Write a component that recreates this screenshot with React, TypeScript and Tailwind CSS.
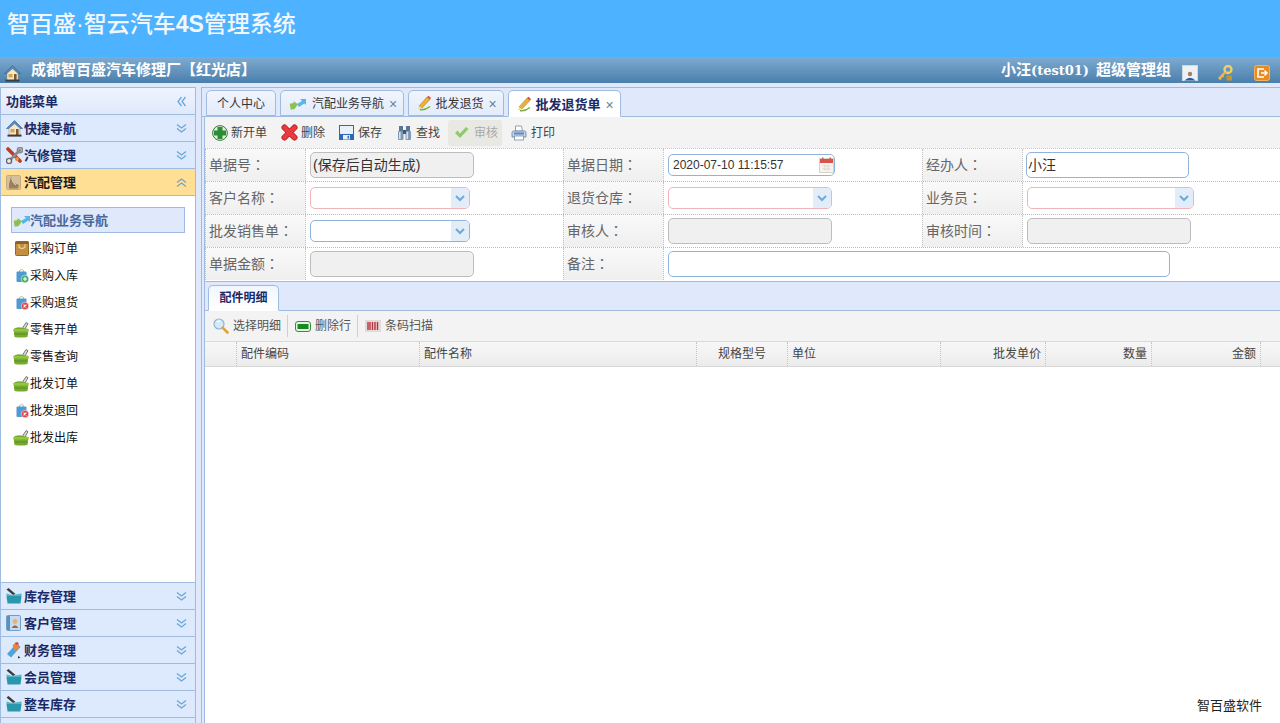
import type { ReactNode } from 'react'

const cjk = "font-['Liberation_Sans','Noto_Sans_CJK_SC',sans-serif]"

/* ---------- 小图标 ---------- */
function Svg({ w = 16, h = 16, children }: { w?: number; h?: number; children: ReactNode }) {
  return (
    <svg width={w} height={h} viewBox={`0 0 ${w} ${h}`} className="shrink-0 block">
      {children}
    </svg>
  )
}

const HomeIcon = () => (
  <Svg w={17} h={17}>
    <path d="M8.5 .5 L16.5 8.5 L14 8.5 L8.5 3.5 L3 8.5 L.5 8.5 Z" fill="#4f8cc8" stroke="#2d5f94" strokeWidth=".6" />
    <path d="M3 8.5 L8.5 3.8 L14 8.5 V15 H3 Z" fill="#f4e9cf" stroke="#a68a55" strokeWidth=".5" />
    <rect x="4.5" y="9" width="4" height="3.5" fill="#d9a441" />
    <rect x="10" y="9" width="2.6" height="6" fill="#7a5a30" />
    <rect x="1.5" y="14.6" width="14" height="2" fill="#3d3d3d" />
  </Svg>
)
const ToolsIcon = () => (
  <Svg w={17} h={17}>
    <path d="M2 2 L14 14" stroke="#c0392b" strokeWidth="3.6" strokeLinecap="round" />
    <path d="M14 3 L3 14" stroke="#8b8b8b" strokeWidth="2.8" strokeLinecap="round" />
    <circle cx="14" cy="3" r="2.6" fill="none" stroke="#8a8a8a" strokeWidth="1.6" />
    <circle cx="3" cy="14" r="2.6" fill="#e8e8e8" stroke="#666" strokeWidth="1.4" />
    <circle cx="11" cy="12" r="2" fill="#e8913a" />
  </Svg>
)
const PartsIcon = () => (
  <Svg w={15} h={15}>
    <rect x=".5" y=".5" width="14" height="14" rx="1" fill="#d6bf99" stroke="#c2aa82" />
    <path d="M5 1.5 L8 8 L13 10 L12 13.5 H3 L3 9 Z" fill="#9c8059" />
    <path d="M5.5 3 L7.5 8 L10 10" stroke="#eadfca" strokeWidth=".9" fill="none" />
  </Svg>
)
const NavIcon = () => (
  <Svg w={18} h={14}>
    <path d="M1 7 H5 V5 L9 9 L5 13 H1 Z" fill="#8cc152" transform="rotate(-10 5 9)" />
    <path d="M8 8 L13 5 L11 3 H17 V9 L15.3 7.5 L10 11 Z" fill="#58b4ec" />
  </Svg>
)
const BrownBag = () => (
  <Svg w={14} h={15}>
    <rect x=".5" y=".5" width="13" height="14" rx="1" fill="#c58f42" stroke="#94682c" />
    <rect x=".5" y=".5" width="13" height="2.5" fill="#8d6129" />
    <path d="M4 3 V6 Q7 9 10 6 V3" fill="none" stroke="#eed39a" strokeWidth="1.1" />
  </Svg>
)
const BlueBag = ({ kind }: { kind: 'plus' | 'x' }) => (
  <Svg w={13} h={15}>
    <path d="M3.5 4 V2.5 Q5.5 .2 7.5 2.5 V4" fill="none" stroke="#b9a78a" strokeWidth=".9" />
    <rect x=".5" y="3.5" width="10" height="10.5" rx="1" fill="#4f9ad1" />
    <circle cx="9" cy="11" r="3.8" fill={kind === 'plus' ? '#3fae64' : '#e0444d'} stroke="#fff" strokeWidth=".5" />
    {kind === 'plus' ? (
      <path d="M7 11 H11 M9 9 V13" stroke="#fff" strokeWidth="1.2" />
    ) : (
      <path d="M7.6 9.6 L10.4 12.4 M10.4 9.6 L7.6 12.4" stroke="#fff" strokeWidth="1.1" />
    )}
  </Svg>
)
const Basket = () => (
  <Svg w={16} h={16}>
    <path d="M9.5 6 L13 .6 L15 1.6 L12 7" fill="#d8d8d8" stroke="#5e5e5e" strokeWidth=".8" />
    <path d="M.5 7 Q4 4.5 8 5.5 L15.5 7 L14.5 15 Q8 16 1.5 15 Z" fill="#77ab2f" />
    <path d="M.5 7 H15.5 V9.5 H.8 Z" fill="#93c640" />
    <path d="M1.2 12 H14.8" stroke="#55871e" strokeWidth=".8" />
  </Svg>
)
const Toolbox = () => (
  <Svg w={16} h={16}>
    <path d="M.5 1.5 L2.5 0 L9.5 6 L7 7 Z" fill="#3c3c3c" />
    <path d="M.5 5.5 L6 7 L15.5 5.5 V8 H.5 Z" fill="#55b6c9" />
    <path d="M.5 8 H15.5 L14.5 15.5 H1.5 Z" fill="#2a97ad" />
  </Svg>
)
const ContactIcon = () => (
  <Svg w={15} h={16}>
    <rect x=".5" y=".5" width="14" height="15" rx="1" fill="#c5dcf0" stroke="#6f9fc7" />
    <rect x="1" y="1" width="3" height="14" fill="#5a8fc0" />
    <circle cx="9" cy="6.5" r="2.4" fill="#e6b07e" />
    <path d="M5.5 13 Q9 7.5 12.5 13 Z" fill="#b5612a" />
  </Svg>
)
const FinanceIcon = () => (
  <Svg w={15} h={17}>
    <path d="M11 1 L14.5 5 L5 15.5 L1 12 Z" fill="#4fa3d8" />
    <path d="M6.5 3.5 L10 .5 L13.5 5.5 L9.5 9.5 Z" fill="#e8863c" />
    <path d="M8.5 1 L11.5 0 L13 2 L10.5 3 Z" fill="#d64a3a" />
    <path d="M12 14 L14.5 15.5 L12 16.5 Z" fill="#333" />
  </Svg>
)
const PencilIcon = () => (
  <Svg w={16} h={16}>
    <path d="M3 11 L11 2 L14 4.5 L6 13 Z" fill="#eab23a" stroke="#a9771f" strokeWidth=".5" />
    <path d="M11 2 L12.5 .8 L15 3 L14 4.5 Z" fill="#d9503f" />
    <path d="M3 11 L2 14.5 L6 13 Z" fill="#f0d9a8" />
    <path d="M4 14.6 Q9 15.5 14 11.5" stroke="#78b13f" strokeWidth="1.6" fill="none" />
  </Svg>
)
const PlusIcon = () => (
  <Svg w={16} h={16}>
    <circle cx="8" cy="8" r="7.4" fill="#dff0df" stroke="#2f7d32" strokeWidth="1" />
    <path d="M5.5 2 H10.5 V5.5 H14 V10.5 H10.5 V14 H5.5 V10.5 H2 V5.5 H5.5 Z" fill="#2e8b36" />
  </Svg>
)
const RedX = () => (
  <Svg w={17} h={17}>
    <path d="M3.5 3.5 L13.5 13.5 M13.5 3.5 L3.5 13.5" stroke="#b81c22" strokeWidth="6" strokeLinecap="round" />
    <path d="M3.5 3.5 L13.5 13.5 M13.5 3.5 L3.5 13.5" stroke="#ea3a3f" strokeWidth="4.4" strokeLinecap="round" />
  </Svg>
)
const Floppy = () => (
  <Svg w={15} h={15}>
    <rect x=".5" y=".5" width="14" height="14" fill="#e8f0fa" stroke="#2f68b4" />
    <rect x="1" y="9" width="13" height="5.5" fill="#2f68b4" />
    <rect x="4" y="10" width="7" height="4.5" fill="#e8eef6" />
    <rect x="8.5" y="10.8" width="1.6" height="2.8" fill="#2f6fbf" />
  </Svg>
)
const Binoculars = () => (
  <Svg w={15} h={16}>
    <rect x="2" y="1" width="4" height="5" fill="#5a7796" />
    <rect x="9" y="1" width="4" height="5" fill="#5a7796" />
    <rect x="1" y="6" width="5.5" height="9" rx="1" fill="#7e99b6" />
    <rect x="8.5" y="6" width="5.5" height="9" rx="1" fill="#7e99b6" />
    <rect x="6" y="5" width="3" height="4" fill="#41566f" />
    <rect x="2" y="7" width="1.6" height="7" fill="#d5e0ec" />
    <rect x="9.5" y="7" width="1.6" height="7" fill="#d5e0ec" />
  </Svg>
)
const CheckIcon = () => (
  <Svg w={15} h={13}>
    <path d="M1 7 L3.5 4.5 L6 7.5 L12 1 L14.5 3 L6 12 Z" fill="#8fcb6a" />
  </Svg>
)
const Printer = () => (
  <Svg w={16} h={16}>
    <path d="M4.5 1 H10.5 L11.5 6 H4.5 Z" fill="#fff" stroke="#7b8ca3" strokeWidth=".8" />
    <path d="M1 7.5 Q1 6 2.5 6 H13.5 Q15 6 15 7.5 V12 H1 Z" fill="#c7d3e2" stroke="#69809b" strokeWidth=".8" />
    <rect x="3" y="7.5" width="10" height="2" fill="#4d8dd0" />
    <rect x="3.5" y="11" width="9" height="4" fill="#fff" stroke="#7b8ca3" strokeWidth=".8" />
  </Svg>
)
const Magnifier = () => (
  <Svg w={16} h={16}>
    <circle cx="6" cy="6" r="5" fill="#d5e9f8" stroke="#8fb4d0" strokeWidth="1.2" />
    <path d="M4 4 Q5 3 7 3.4" stroke="#fff" strokeWidth="1.2" fill="none" />
    <path d="M9.8 9.8 L14.5 14.5" stroke="#e0a23c" strokeWidth="2.6" strokeLinecap="round" />
  </Svg>
)
const GreenBar = () => (
  <Svg w={16} h={11}>
    <rect x=".5" y=".5" width="15" height="10" rx="2.5" fill="#e6f2e6" stroke="#3a8a3f" />
    <rect x="2.5" y="3" width="11" height="5" fill="#168a1e" />
  </Svg>
)
const Barcode = () => (
  <Svg w={16} h={12}>
    <rect width="16" height="12" fill="#e4d9d9" />
    <path d="M3 2 V10 M5 2 V10 M7.5 2 V10 M10 2 V10 M12.5 2 V10" stroke="#b8323c" strokeWidth="1.4" />
  </Svg>
)
const CalendarIcon = () => (
  <Svg w={15} h={16}>
    <rect x=".5" y="1.5" width="14" height="14" fill="#f7f3ef" stroke="#d8d0c8" />
    <rect x="1" y="2" width="13" height="4" fill="#d9534a" />
    <rect x="3" y=".5" width="1.5" height="3" fill="#d9534a" />
    <rect x="10.5" y=".5" width="1.5" height="3" fill="#d9534a" />
    <path d="M3 9 H12 M3 12 H12 M6 7.5 V14 M9 7.5 V14" stroke="#d7d0c8" strokeWidth=".7" />
  </Svg>
)
const UserCard = () => (
  <Svg w={16} h={16}>
    <rect x=".5" y=".5" width="15" height="15" fill="#eef1f4" stroke="#cfd9e3" />
    <circle cx="8" cy="9" r="2.2" fill="#a97f60" />
    <path d="M2.5 15.5 Q8 10 13.5 15.5 Z" fill="#1f5fa8" />
  </Svg>
)
const KeyIcon = () => (
  <Svg w={15} h={16}>
    <circle cx="10" cy="4.5" r="3.5" fill="none" stroke="#f3cd6a" strokeWidth="2.4" />
    <path d="M7.5 7 L1.5 13 L3 14.5 M4 10.5 L5.5 12" stroke="#eeb945" strokeWidth="2.2" fill="none" />
    <rect x="8.5" y="10.5" width="5.5" height="5" fill="#c9922a" />
  </Svg>
)
const ExitIcon = () => (
  <Svg w={16} h={16}>
    <rect x=".5" y=".5" width="15" height="15" rx="2" fill="#ea8a1f" stroke="#f3b064" />
    <path d="M10 4 H4 V12 H10" fill="none" stroke="#fff" strokeWidth="1.7" />
    <path d="M7 8 H13 M10.5 5.5 L13 8 L10.5 10.5" fill="none" stroke="#fff" strokeWidth="1.5" />
  </Svg>
)
const DoubleChevron = ({ dir }: { dir: 'down' | 'up' | 'left' }) => {
  const rot = dir === 'down' ? 0 : dir === 'up' ? 180 : 90
  return (
    <svg width="11" height="11" viewBox="0 0 11 11" className="shrink-0" style={{ transform: `rotate(${rot}deg)` }}>
      <path d="M1 1.5 L5.5 5 L10 1.5 M1 5.5 L5.5 9 L10 5.5" fill="none" stroke="#6ba6d8" strokeWidth="1.3" />
    </svg>
  )
}

/* ---------- 左侧菜单 ---------- */
function AccordionHead({ icon, label, open, active }: { icon: ReactNode; label: string; open?: boolean; active?: boolean }) {
  return (
    <div
      className={`h-[27px] flex items-center pl-[5px] pr-[8px] border-b border-[#9fbce0] ${
        active ? 'bg-[#ffdf94]' : 'bg-[#dde9fc]'
      }`}
    >
      <span className="w-[18px] flex justify-start">{icon}</span>
      <span className={`pt-[2px] text-[13px] font-bold ${active ? 'text-[#1a1a1a]' : 'text-[#1b2a66]'}`}>{label}</span>
      <span className="ml-auto">
        <DoubleChevron dir={open ? 'up' : 'down'} />
      </span>
    </div>
  )
}

const MENU_ITEMS: Array<{ label: string; icon: ReactNode }> = [
  { label: '采购订单', icon: <BrownBag /> },
  { label: '采购入库', icon: <BlueBag kind="plus" /> },
  { label: '采购退货', icon: <BlueBag kind="x" /> },
  { label: '零售开单', icon: <Basket /> },
  { label: '零售查询', icon: <Basket /> },
  { label: '批发订单', icon: <Basket /> },
  { label: '批发退回', icon: <BlueBag kind="x" /> },
  { label: '批发出库', icon: <Basket /> },
]

function Sidebar() {
  return (
    <aside className="w-[196px] shrink-0 mt-[4px] flex flex-col border-x border-t border-[#9fbce0] bg-white">
      <div className="h-[27px] shrink-0 flex items-center pl-[5px] pr-[8px] border-b border-[#9fbce0] bg-gradient-to-b from-[#eff5fe] to-[#dfe9fb]">
        <span className="pt-[2px] text-[13px] font-bold text-[#1b2a66]">功能菜单</span>
        <span className="ml-auto">
          <DoubleChevron dir="left" />
        </span>
      </div>
      <AccordionHead icon={<HomeIcon />} label="快捷导航" />
      <AccordionHead icon={<ToolsIcon />} label="汽修管理" />
      <AccordionHead icon={<PartsIcon />} label="汽配管理" open active />

      <div className="flex-1 pt-[11px] pl-[10px] pr-[10px]">
        <div className="h-[26px] flex items-center pl-[1px] border border-[#9fbce0] bg-[#dfe9fb]">
          <NavIcon />
          <span className="pt-[1px] -ml-[1px] text-[13px] font-bold text-[#47689b]">汽配业务导航</span>
        </div>
        {MENU_ITEMS.map((item) => (
          <div key={item.label} className="h-[27px] flex items-center text-[12px] text-[#111] relative top-[2px]">
            <span className="w-[19px] flex justify-end pr-[1px]">{item.icon}</span>
            <span>{item.label}</span>
          </div>
        ))}
      </div>

      <div className="border-t border-[#9fbce0]">
        <AccordionHead icon={<Toolbox />} label="库存管理" />
        <AccordionHead icon={<ContactIcon />} label="客户管理" />
        <AccordionHead icon={<FinanceIcon />} label="财务管理" />
        <AccordionHead icon={<Toolbox />} label="会员管理" />
        <AccordionHead icon={<Toolbox />} label="整车库存" />
        <div className="h-[5px] bg-[#dde9fc]" />
      </div>
    </aside>
  )
}

/* ---------- 顶部页签 ---------- */
function Tab({ icon, label, w, close, active, extra }: { icon?: ReactNode; label: string; w: string; close?: boolean; active?: boolean; extra?: string }) {
  return (
    <div
      className={`${w} flex items-center justify-center rounded-t-[5px] border border-[#9fbce0] ${extra ?? ''} ${
        active
          ? 'h-[27px] mb-[-1px] gap-[3px] bg-white border-b-white font-bold text-[13px] text-[#1b2a66]'
          : 'h-[26px] gap-[3px] bg-gradient-to-b from-[#f0f5fd] to-[#e3ecfb] text-[12px] text-[#333]'
      }`}
    >
      {icon}
      <span className="pt-[2px]">{label}</span>
      {close && <span className="text-[#6b7f99] text-[14px] font-normal leading-none ml-[2px] pt-[2px]">×</span>}
    </div>
  )
}

/* ---------- 工具条按钮 ---------- */
function ToolButton({ icon, label, className, disabled }: { icon: ReactNode; label: string; className: string; disabled?: boolean }) {
  return (
    <div
      className={`h-[26px] flex items-center text-[12px] rounded-[3px] ${className} ${
        disabled ? 'bg-[#e9e9e4] text-[#aaa]' : 'text-[#444]'
      }`}
    >
      {icon}
      <span className="pt-[1px]">{label}</span>
    </div>
  )
}

/* ---------- 表单 ---------- */
const boxBase = 'rounded-[5px] border flex items-center text-[#333]'

function GreyBox({ w, children }: { w: string; children?: ReactNode }) {
  return <div className={`${boxBase} ${w} h-[26px] bg-[#f0f0f0] border-[#bdbdbd] pl-[2px] text-[14px]`}>{children}</div>
}
function TextBox({ w, children }: { w: string; children?: ReactNode }) {
  return <div className={`${boxBase} ${w} h-[26px] bg-white border-[#8fb3d9] pl-[1px] text-[14px]`}>{children}</div>
}
function Combo({ w, required }: { w: string; required?: boolean }) {
  return (
    <div className={`${boxBase} ${w} h-[22px] bg-white justify-end overflow-hidden ${required ? 'border-[#eeb4b8]' : 'border-[#8fb3d9]'}`}>
      <div className="w-[18px] h-full bg-[#e3edfa] flex items-center justify-center">
        <svg width="10" height="7" viewBox="0 0 10 7">
          <path d="M1 1 L5 5 L9 1" fill="none" stroke="#6eaad6" strokeWidth="2" />
        </svg>
      </div>
    </div>
  )
}

// 冒号用繁中字形，位置居中
function Label({ text }: { text: string }) {
  return (
    <div className="w-[101px] shrink-0 flex items-center pl-[3px] text-[14px] text-[#666] border-x border-dotted border-[#c4c4c4] bg-gradient-to-b from-[#f9f9f9] to-[#efefef]">
      <span>
        {text}
        <span className="font-['Noto_Sans_CJK_TC',sans-serif]">：</span>
      </span>
    </div>
  )
}

const CELL_W = ['w-[358px]', 'w-[359px]', 'flex-1']

function Row({ cells }: { cells: Array<[string, ReactNode]> }) {
  return (
    <div className="h-[33px] flex border-b border-dotted border-[#bcbcbc]">
      {cells.map(([label, field], i) => (
        <div key={label} className={`flex ${CELL_W[i]}`}>
          <Label text={label} />
          <div className="flex-1 flex items-center pl-[3px] bg-white">{field}</div>
        </div>
      ))}
    </div>
  )
}

/* ---------- 明细表头 ---------- */
const COLUMNS: Array<{ label: string; w: string; align: string }> = [
  { label: '', w: 'w-[31px]', align: '' },
  { label: '配件编码', w: 'w-[183px]', align: 'justify-start' },
  { label: '配件名称', w: 'w-[277px]', align: 'justify-start' },
  { label: '规格型号', w: 'w-[91px]', align: 'justify-center' },
  { label: '单位', w: 'w-[153px]', align: 'justify-start' },
  { label: '批发单价', w: 'w-[105px]', align: 'justify-end' },
  { label: '数量', w: 'w-[106px]', align: 'justify-end' },
  { label: '金额', w: 'w-[109px]', align: 'justify-end' },
]

function MainPanel() {
  return (
    <main className="flex-1 min-w-0 mt-[4px] flex flex-col border-t border-l border-[#9fbce0] ml-[5px]">
      {/* 页签 */}
      <div className="h-[29px] shrink-0 flex items-end gap-[4px] pl-[4px] bg-[#dfe9fb] border-b border-[#9fbce0]">
        <Tab label="个人中心" w="w-[70px]" />
        <Tab icon={<span className="mr-[2px]"><NavIcon /></span>} label="汽配业务导航" w="w-[124px]" extra="pl-[2px]" close />
        <Tab icon={<PencilIcon />} label="批发退货" w="w-[96px]" extra="pl-[1px]" close />
        <Tab icon={<PencilIcon />} label="批发退货单" w="w-[113px]" extra="pl-[1px]" close active />
      </div>

      <div className="flex-1 min-h-0 flex flex-col pl-[2px] bg-[#dfe9fb]">
        <div className="flex-1 min-h-0 flex flex-col border-l border-[#9fbce0] bg-white">
          {/* 工具条 */}
          <div className="h-[31px] shrink-0 flex items-center pl-[7px] bg-[#f3f3f3]">
            <ToolButton icon={<PlusIcon />} label="新开单" className="w-[69px] gap-[3px]" />
            <ToolButton icon={<RedX />} label="删除" className="w-[58px] gap-[3px]" />
            <ToolButton icon={<Floppy />} label="保存" className="w-[58px] gap-[4px]" />
            <ToolButton icon={<Binoculars />} label="查找" className="w-[51px] gap-[4px]" />
            <ToolButton icon={<CheckIcon />} label="审核" className="w-[54px] pl-[6px] gap-[5px]" disabled />
            <ToolButton icon={<Printer />} label="打印" className="w-[60px] ml-[9px] gap-[4px]" />
          </div>

          {/* 表单 */}
          <div className="shrink-0 border-t border-dotted border-[#c4c4c4]">
            <Row
              cells={[
                ['单据号', <div key="a" className="ml-[1px]"><GreyBox w="w-[164px]">(保存后自动生成)</GreyBox></div>],
                [
                  '单据日期',
                  <div key="b" className={`${boxBase} w-[167px] h-[22px] ml-[1px] bg-white border-[#8fb3d9] pl-[4px] justify-between text-[12px] text-[#222]`}>
                    <span>2020-07-10 11:15:57</span>
                    <CalendarIcon />
                  </div>,
                ],
                ['经办人', <TextBox key="c" w="w-[163px]">小汪</TextBox>],
              ]}
            />
            <Row
              cells={[
                ['客户名称', <div key="a" className="ml-[1px]"><Combo w="w-[160px]" required /></div>],
                ['退货仓库', <div key="b" className="ml-[1px]"><Combo w="w-[164px]" required /></div>],
                ['业务员', <div key="c" className="ml-[1px]"><Combo w="w-[167px]" required /></div>],
              ]}
            />
            <Row
              cells={[
                ['批发销售单', <div key="a" className="ml-[1px]"><Combo w="w-[160px]" /></div>],
                ['审核人', <div key="b" className="ml-[1px]"><GreyBox w="w-[164px]" /></div>],
                ['审核时间', <div key="c" className="ml-[1px]"><GreyBox w="w-[164px]" /></div>],
              ]}
            />
            <div className="h-[33px] pb-[1px] flex">
              <div className="w-[358px] flex">
                <Label text="单据金额" />
                <div className="flex-1 flex items-center pl-[4px]"><GreyBox w="w-[164px]" /></div>
              </div>
              <Label text="备注" />
              <div className="flex-1 flex items-center pl-[4px]"><TextBox w="w-[502px]" /></div>
            </div>
          </div>

          {/* 明细页签 */}
          <div className="h-[30px] shrink-0 flex items-end pl-[3px] bg-[#dfe9fb] border-y border-[#9fbce0]">
            <div className="w-[71px] h-[26px] mb-[-1px] flex items-center justify-center rounded-t-[5px] border border-[#9fbce0] border-b-white bg-gradient-to-b from-[#f1f6fe] to-white text-[12px] font-bold text-[#1b2a66]">
              配件明细
            </div>
          </div>

          {/* 明细工具条 */}
          <div className="h-[30px] shrink-0 flex items-center pl-[8px] bg-[#f3f3f3] text-[12px] text-[#555]">
            <Magnifier />
            <span className="ml-[4px]">选择明细</span>
            <span className="h-[22px] border-l border-[#cfcfcf] ml-[6px] mr-[7px]" />
            <GreenBar />
            <span className="ml-[4px]">删除行</span>
            <span className="h-[22px] border-l border-[#cfcfcf] ml-[6px] mr-[7px]" />
            <Barcode />
            <span className="ml-[4px]">条码扫描</span>
          </div>

          {/* 表头 */}
          <div className="h-[26px] shrink-0 flex pl-[1px] bg-gradient-to-b from-[#f7f7f7] to-[#ececec] border-y border-[#d9d9d9] text-[12px] text-[#444]">
            {COLUMNS.map((c, i) => (
              <div key={i} className={`${c.w} shrink-0 flex items-center px-[4px] border-r border-dotted border-[#c4c4c4] ${c.align}`}>
                {c.label}
              </div>
            ))}
          </div>

          <div className="flex-1 bg-white flex items-end justify-end pr-[18px] pb-[8px] text-[13px] text-[#222]">智百盛软件</div>
        </div>
      </div>
    </main>
  )
}

export default function App() {
  return (
    <div className={`h-[723px] w-[1280px] overflow-hidden flex flex-col bg-[#dfe9fb] ${cjk}`}>
      <header className="h-[57px] shrink-0 bg-[#4db2ff] flex items-start pl-[7px] pt-[9px]">
        <h1 className="text-[23px] leading-[30px] font-medium text-[#f2f7fb]">
          智百盛·智云汽车<span className="font-bold">4S</span>管理系统
        </h1>
      </header>
      <div className="h-[26px] shrink-0 flex items-center pl-[4px] bg-gradient-to-b from-[#7eabd0] to-[#4a7fac] text-white">
        <span className="pt-[7px]"><HomeIcon /></span>
        <span className="ml-[10px] text-[15px] font-bold">成都智百盛汽车修理厂【红光店】</span>
        <span className="ml-auto text-[15px] font-bold">
          小汪<span className="font-['DejaVu_Serif',serif] text-[13px]">(test01)</span>
          <span className="ml-[7px]">超级管理组</span>
        </span>
        <span className="ml-[11px] pt-[6px]"><UserCard /></span>
        <span className="ml-[20px] pt-[6px]"><KeyIcon /></span>
        <span className="ml-[21px] mr-[10px] pt-[6px]"><ExitIcon /></span>
      </div>
      <div className="flex-1 min-h-0 flex bg-[#dfe9fb]">
        <Sidebar />
        <MainPanel />
      </div>
    </div>
  )
}
